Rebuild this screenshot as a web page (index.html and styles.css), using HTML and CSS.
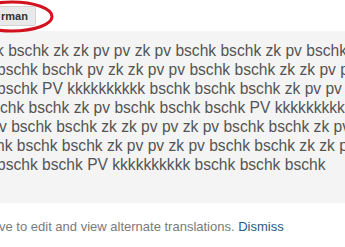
FILE: index.html
```html
<!DOCTYPE html>
<html>
<head>
<meta charset="utf-8">
<link rel="stylesheet" href="styles.css">
</head>
<body>
<div class="toolbar">
  <span class="lang-btn">rman</span>
  <svg class="circle" width="80" height="36" viewBox="0 0 80 36"><ellipse cx="12" cy="16.5" rx="40" ry="14.5" fill="none" stroke="#d3121f" stroke-width="3"/></svg>
</div>
<div class="panel">
  <div class="line l1">k bschk zk zk pv pv zk pv bschk bschk zk pv bschk</div>
  <div class="line l2">bschk bschk pv zk zk pv pv bschk bschk zk zk pv pv</div>
  <div class="line l2">bschk PV kkkkkkkkkk bschk bschk bschk zk pv pv</div>
  <div class="line l4">chk bschk zk pv bschk bschk bschk PV kkkkkkkkkk</div>
  <div class="line l5">v bschk bschk zk zk pv pv zk pv bschk bschk zk pv</div>
  <div class="line l6">hk bschk bschk zk pv pv zk pv bschk bschk zk zk pv</div>
  <div class="line l2">bschk bschk PV kkkkkkkkkk bschk bschk bschk</div>
</div>
<div class="notice">ve to edit and view alternate translations. <span class="dismiss">Dismiss</span></div>
</body>
</html>
```
FILE: styles.css
```css
html, body {
  margin: 0;
  padding: 0;
  background: #ffffff;
  overflow: hidden;
  width: 345px;
  height: 247px;
  font-family: "Liberation Sans", Arial, sans-serif;
}
.toolbar {
  position: relative;
  height: 31px;
  padding-top: 6px;
  box-sizing: border-box;
}
.lang-btn {
  display: inline-block;
  height: 18px;
  line-height: 18px;
  padding: 0 7px 0 1px;
  background: #e9e9e9;
  border: 1px solid #d4d4d4;
  border-left: none;
  border-radius: 0 2px 2px 0;
  font-size: 11px;
  font-weight: bold;
  color: #333333;
}
.circle {
  position: absolute;
  left: 0;
  top: 0;
}
.panel {
  background: #f4f4f4;
  height: 172px;
  box-sizing: border-box;
  padding-top: 10px;
  overflow: hidden;
}
.line {
  white-space: nowrap;
  font-size: 15.6px;
  line-height: 19px;
  color: #555555;
}
.l1 { margin-left: -4px; }
.l2 { margin-left: -3px; }
.l4 { margin-left: 0; }
.l5 { margin-left: -1px; }
.l6 { margin-left: -4px; }
.notice {
  margin-top: 16px;
  margin-left: -1px;
  white-space: nowrap;
  font-size: 13px;
  line-height: 16px;
  color: #7a7a7a;
}
.dismiss {
  color: #2b5a88;
}
```
